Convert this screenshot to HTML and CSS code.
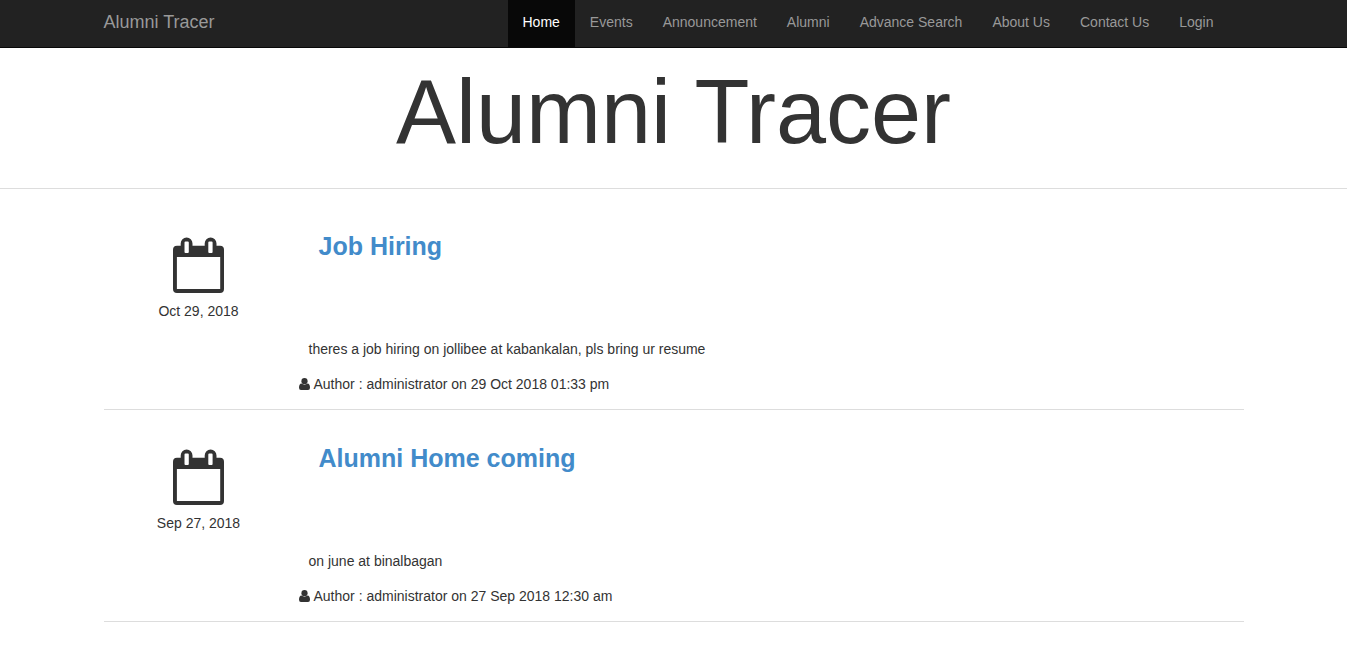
FILE: index.html
```html
<!DOCTYPE html>
<html lang="en">
<head>
<meta charset="utf-8">
<meta name="viewport" content="width=device-width, initial-scale=1">
<title>Alumni Tracer</title>
<link rel="stylesheet" href="styles.css">
</head>
<body>
<svg class="sprite" aria-hidden="true">
  <symbol id="calendar" viewBox="0 0 51 56">
    <path fill-rule="evenodd" d="M4 8.700H7.700V6.500A5.800 5.800 0 0 1 19.500 6.500V8.700H31.700V6.500A5.800 5.800 0 0 1 43.500 6.500V8.700H47A4 4 0 0 1 51 12.700V52A4 4 0 0 1 47 56H4A4 4 0 0 1 0 52V12.700A4 4 0 0 1 4 8.700ZM3.900 20V52H47.200V20ZM12.500 4.500H14.800A1 1 0 0 1 15.800 5.500V15A1 1 0 0 1 14.800 16H12.500A1 1 0 0 1 11.500 15V5.500A1 1 0 0 1 12.500 4.500ZM36.300 4.500H38.600A1 1 0 0 1 39.600 5.500V15A1 1 0 0 1 38.600 16H36.300A1 1 0 0 1 35.300 15V5.500A1 1 0 0 1 36.300 4.500Z"/>
  </symbol>
  <symbol id="user" viewBox="0 0 11 12">
    <circle cx="5.500" cy="3.200" r="3.100"/>
    <path d="M2.500 5.600Q5.500 7.800 8.500 5.600Q11 5.900 11 9.700Q11 12 9 12H2Q0 12 0 9.700Q0 5.900 2.500 5.600Z"/>
  </symbol>
</svg>
<nav class="navbar">
  <div class="container navbar-inner">
    <a class="brand" href="#">Alumni Tracer</a>
    <ul class="nav">
      <li><a class="nav-link active" href="#">Home</a></li>
      <li><a class="nav-link" href="#">Events</a></li>
      <li><a class="nav-link" href="#">Announcement</a></li>
      <li><a class="nav-link" href="#">Alumni</a></li>
      <li><a class="nav-link" href="#">Advance Search</a></li>
      <li><a class="nav-link" href="#">About Us</a></li>
      <li><a class="nav-link" href="#">Contact Us</a></li>
      <li><a class="nav-link" href="#">Login</a></li>
    </ul>
  </div>
</nav>
<header class="page-header">
  <h1>Alumni Tracer</h1>
</header>
<main class="container posts">
  <article class="post">
    <div class="post-date">
      <svg class="calendar-icon" aria-hidden="true"><use href="#calendar"/></svg>
      <time datetime="2018-10-29">Oct 29, 2018</time>
    </div>
    <div class="post-body">
      <h2><a href="#">Job Hiring</a></h2>
      <p class="post-text">theres a job hiring on jollibee at kabankalan, pls bring ur resume</p>
      <p class="post-author"><svg class="user-icon" aria-hidden="true"><use href="#user"/></svg>Author : administrator on 29 Oct 2018 01:33 pm</p>
    </div>
  </article>
  <article class="post">
    <div class="post-date">
      <svg class="calendar-icon" aria-hidden="true"><use href="#calendar"/></svg>
      <time datetime="2018-09-27">Sep 27, 2018</time>
    </div>
    <div class="post-body">
      <h2><a href="#">Alumni Home coming</a></h2>
      <p class="post-text">on june at binalbagan</p>
      <p class="post-author"><svg class="user-icon" aria-hidden="true"><use href="#user"/></svg>Author : administrator on 27 Sep 2018 12:30 am</p>
    </div>
  </article>
</main>
</body>
</html>
```

FILE: styles.css
```css
* {
  box-sizing: border-box;
}

body {
  margin: 0;
  background: #fff;
  color: #333;
  font-family: "Liberation Sans", Arial, sans-serif;
  font-size: 14px;
  line-height: 20px;
}

a {
  text-decoration: none;
}

.sprite {
  display: none;
}

.container {
  width: 100%;
  max-width: 1140px;
  margin: 0 auto;
}

.navbar {
  background: #222;
  border-bottom: 1px solid #080808;
}

.navbar-inner {
  display: flex;
  justify-content: space-between;
  padding-right: 15px;
}

.brand {
  padding: 12px 0 15px;
  color: #999;
  font-size: 18px;
}

.nav {
  display: flex;
  flex-wrap: wrap;
  margin: 0;
  padding: 0;
  list-style: none;
}

.nav-link {
  display: block;
  padding: 12px 15px 15px;
  color: #999;
}

.nav-link.active {
  background: #080808;
  color: #fff;
}

.page-header {
  padding: 14px 0 26px;
  border-bottom: 1px solid #ddd;
  text-align: center;
}

.page-header h1 {
  margin: 0;
  font-size: 90px;
  font-weight: 400;
  line-height: 100px;
}

.posts {
  padding-top: 9px;
}

.post {
  display: flex;
  border-bottom: 1px solid #ddd;
}

.post-date {
  display: flex;
  flex: 0 0 190px;
  flex-direction: column;
  align-items: center;
  gap: 8px;
  padding-top: 39px;
}

.calendar-icon {
  width: 51px;
  height: 56px;
  fill: #333;
}

.post-body {
  flex: 1;
  padding: 34px 0 15px 5px;
}

.post-body h2 {
  margin: 0 0 79px;
  padding-left: 20px;
  font-size: 25px;
  line-height: 28px;
}

.post-body h2 a {
  color: #428bca;
}

.post-text {
  margin: 0 0 15px;
  padding-left: 10px;
}

.post-author {
  display: flex;
  align-items: center;
  gap: 4px;
  margin: 0;
}

.user-icon {
  width: 11px;
  height: 12px;
  fill: #333;
}
```
